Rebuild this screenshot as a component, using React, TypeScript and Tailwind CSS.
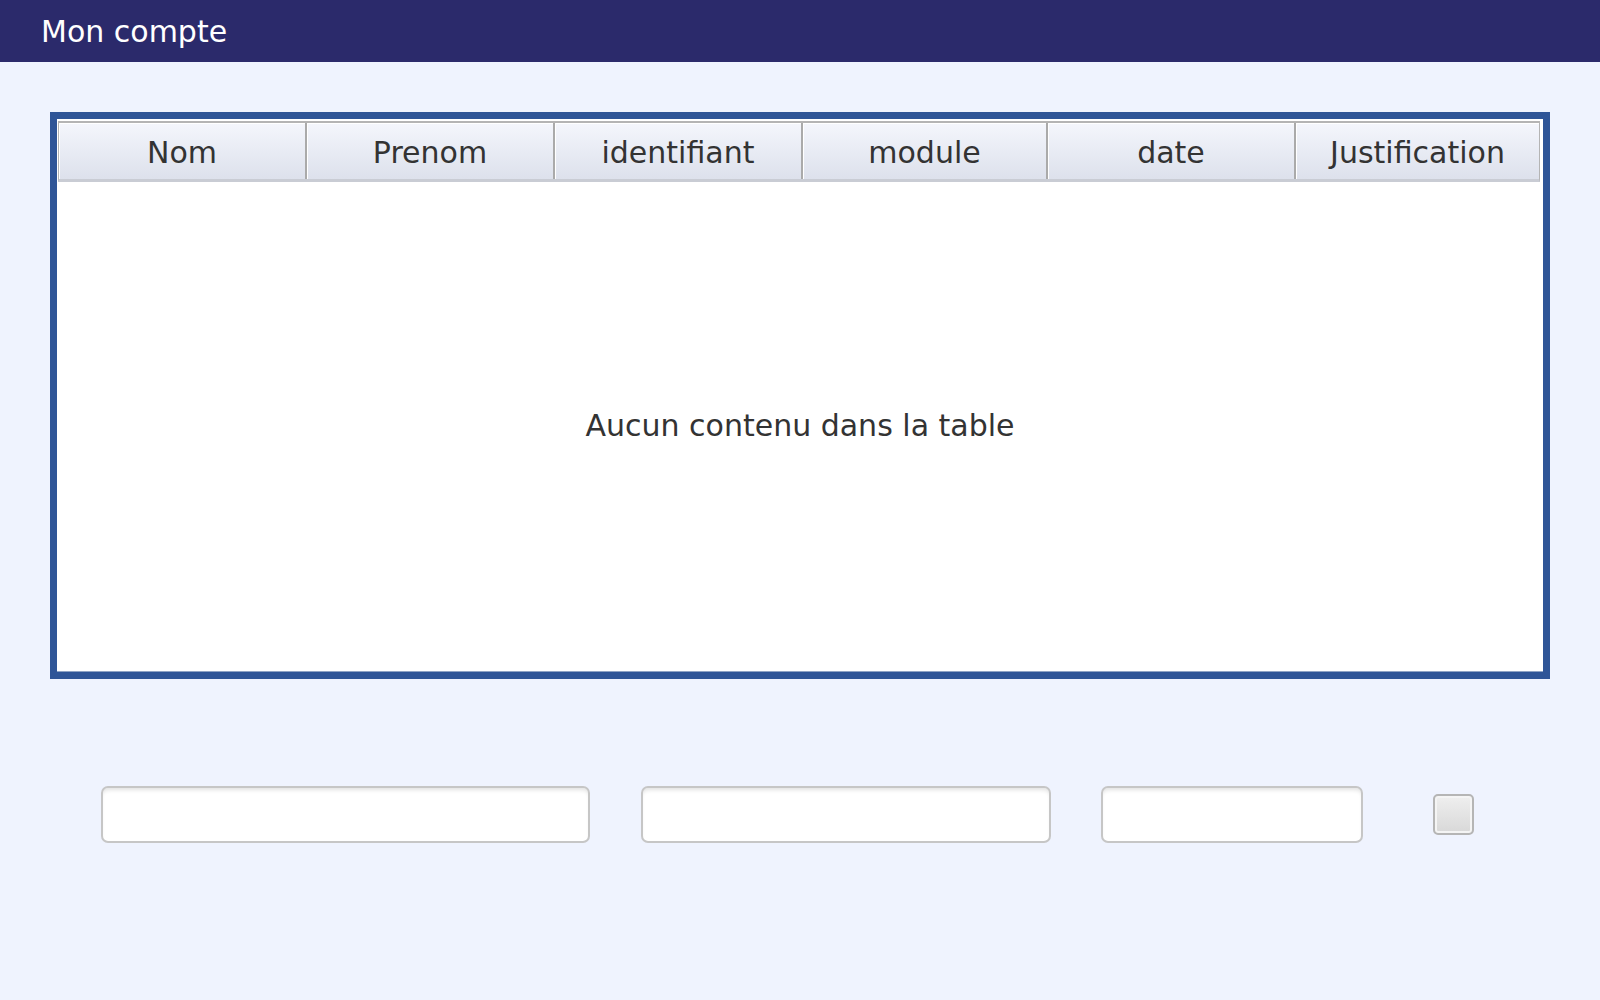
const columns = ['Nom', 'Prenom', 'identifiant', 'module', 'date', 'Justification'];
const widths = ['w-[248px]', 'w-[248px]', 'w-[248px]', 'w-[245px]', 'w-[248px]', 'flex-1'];

const font = { fontFamily: '"DejaVu Sans", Verdana, sans-serif' };

function TextInput({ width }: { width: string }) {
  return (
    <input
      type="text"
      className={`${width} h-[57px] rounded-[7px] border-2 border-[#c6c6c6] bg-white shadow-[inset_0_4px_4px_-2px_rgba(0,0,0,0.12)] outline-none`}
    />
  );
}

export default function App() {
  return (
    <div className="min-h-[1000px] w-[1600px] bg-[#eff3fe] text-[#333333]" style={font}>
      <div className="flex h-[62px] items-center bg-[#2b2a6b] pl-[41px] text-[30px] text-white">
        Mon compte
      </div>

      <div className="px-[50px] pt-[50px]">
        <div className="flex h-[567px] flex-col border-[7px] border-[#2f5597] bg-white">
          {/* column header */}
          <div className="mt-[2px] ml-[1px] mr-[3px] flex h-[61px] border-x border-t-2 border-[#b4b4b4] border-b-[3px] border-b-[#c9ccd4]">
            {columns.map((c, i) => (
              <div
                key={c}
                className={`${widths[i]} flex items-center justify-center bg-gradient-to-b from-[#f4f6fc] to-[#dde1ec] pt-[2px] text-[30px] text-[#333333] ${
                  i < columns.length - 1 ? 'border-r-2 border-[#aaaaaa]' : ''
                } shadow-[inset_1px_1px_0_#ffffff]`}
              >
                {c}
              </div>
            ))}
          </div>
          <div className="flex flex-1 items-center justify-center border-b border-[#8fa3c4] pb-[2px] text-[30px] text-[#333333]">
            Aucun contenu dans la table
          </div>
        </div>
      </div>

      <div className="mt-[107px] flex items-center pl-[101px]">
        <TextInput width="w-[489px]" />
        <div className="w-[51px]" />
        <TextInput width="w-[410px]" />
        <div className="w-[50px]" />
        <TextInput width="w-[262px]" />
        <div className="w-[70px]" />
        <div className="h-[41px] w-[41px] rounded-[5px] border-2 border-[#b5b5b5] bg-gradient-to-b from-[#efefef] to-[#d8d8d8] shadow-[inset_0_0_0_2px_#f4f4f4]" />
      </div>
    </div>
  );
}
